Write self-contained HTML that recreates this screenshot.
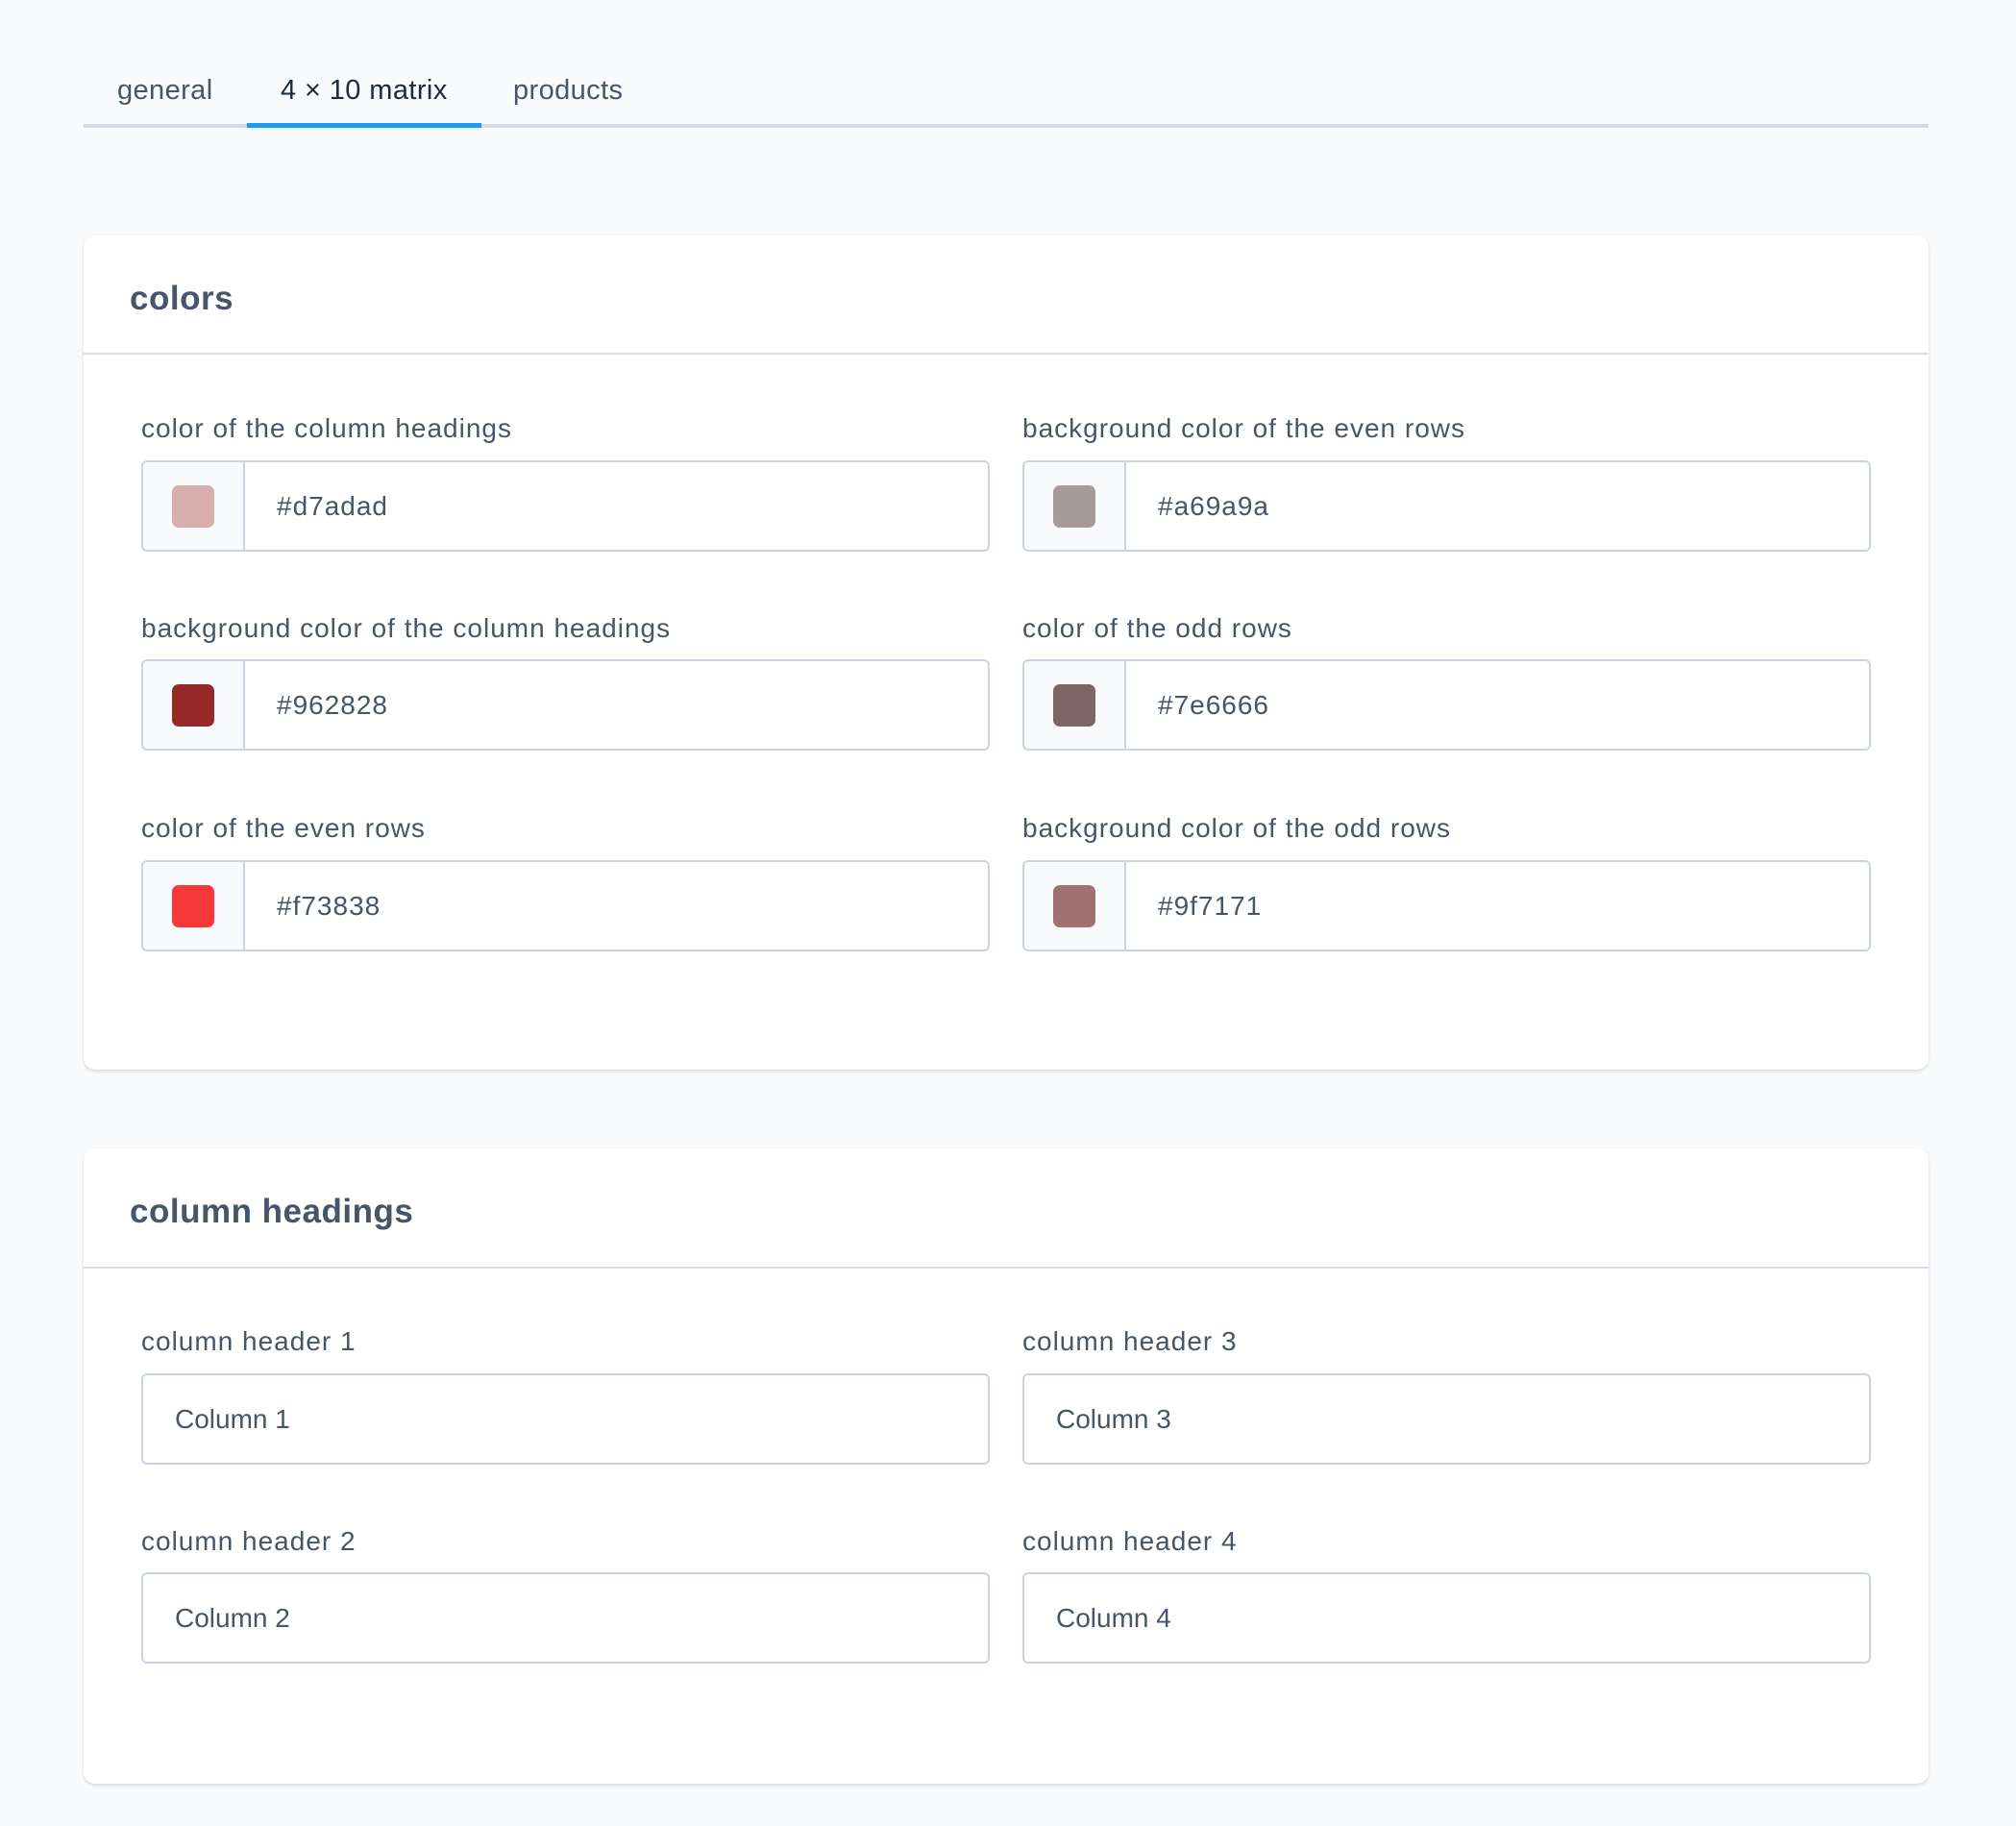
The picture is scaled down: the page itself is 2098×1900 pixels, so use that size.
<!DOCTYPE html>
<html><head><meta charset="utf-8"><style>
*{box-sizing:border-box;margin:0;padding:0}
body{width:2098px;height:1900px;background:#f8fafc;font-family:"Liberation Sans",sans-serif;color:#475569;position:relative;overflow:hidden}
.abs{position:absolute}
.tab{position:absolute;top:74px;font-size:29px;line-height:40px;color:#475569;letter-spacing:0.4px}
.card{position:absolute;left:87px;width:1920px;background:#fff;border-radius:12px;box-shadow:0 2px 3px rgba(0,0,0,.12),0 0 1px rgba(0,0,0,.08)}
.h{position:absolute;left:48px;font-size:35px;font-weight:bold;color:#475569;letter-spacing:0.5px}
.div{position:absolute;left:0;right:0;height:2px;background:#d7dee6}
.lbl{position:absolute;font-size:28px;line-height:34px;color:#475569;letter-spacing:1px}
.inp{position:absolute;width:883px;height:95px;border:2px solid #cbd5e1;border-radius:6px;background:#fff;font-size:28px;color:#475569}
.sw{position:absolute;left:0;top:0;bottom:0;width:106px;background:#f8fafc;border-right:2px solid #cbd5e1;border-radius:5px 0 0 5px}
.sw i{position:absolute;left:30px;top:24px;width:44px;height:44px;border-radius:7px}
.inp span{position:absolute;top:28px;line-height:36px}
.hex{letter-spacing:1px}
</style></head><body>
<div class="tab" style="left:122px">general</div>
<div class="tab" style="left:292px;color:#1e293b">4 × 10 matrix</div>
<div class="tab" style="left:534px">products</div>
<div class="abs" style="left:87px;top:129px;width:1920px;height:4px;background:#d3dae2"></div>
<div class="abs" style="left:257px;top:128px;width:244px;height:5px;background:#1d9bf0"></div>

<div class="card" style="top:245px;height:868px">
<div class="h" style="top:46px">colors</div>
<div class="div" style="top:122px"></div>
</div>
<div class="card" style="top:1195px;height:661px">
<div class="h" style="top:46px">column headings</div>
<div class="div" style="top:123px"></div>
</div>

<div class="lbl" style="left:147px;top:429px">color of the column headings</div>
<div class="inp" style="left:147px;top:479px"><div class="sw"><i style="background:#d7adad"></i></div><span class="hex" style="left:139px">#d7adad</span></div>
<div class="lbl" style="left:1064px;top:429px">background color of the even rows</div>
<div class="inp" style="left:1064px;top:479px"><div class="sw"><i style="background:#a69a9a"></i></div><span class="hex" style="left:139px">#a69a9a</span></div>

<div class="lbl" style="left:147px;top:637px">background color of the column headings</div>
<div class="inp" style="left:147px;top:686px"><div class="sw"><i style="background:#962828"></i></div><span class="hex" style="left:139px">#962828</span></div>
<div class="lbl" style="left:1064px;top:637px">color of the odd rows</div>
<div class="inp" style="left:1064px;top:686px"><div class="sw"><i style="background:#7e6666"></i></div><span class="hex" style="left:139px">#7e6666</span></div>

<div class="lbl" style="left:147px;top:845px">color of the even rows</div>
<div class="inp" style="left:147px;top:895px"><div class="sw"><i style="background:#f73838"></i></div><span class="hex" style="left:139px">#f73838</span></div>
<div class="lbl" style="left:1064px;top:845px">background color of the odd rows</div>
<div class="inp" style="left:1064px;top:895px"><div class="sw"><i style="background:#9f7171"></i></div><span class="hex" style="left:139px">#9f7171</span></div>

<div class="lbl" style="left:147px;top:1379px">column header 1</div>
<div class="inp" style="left:147px;top:1429px"><span style="left:33px">Column 1</span></div>
<div class="lbl" style="left:1064px;top:1379px">column header 3</div>
<div class="inp" style="left:1064px;top:1429px"><span style="left:33px">Column 3</span></div>
<div class="lbl" style="left:147px;top:1587px">column header 2</div>
<div class="inp" style="left:147px;top:1636px"><span style="left:33px">Column 2</span></div>
<div class="lbl" style="left:1064px;top:1587px">column header 4</div>
<div class="inp" style="left:1064px;top:1636px"><span style="left:33px">Column 4</span></div>
</body></html>
